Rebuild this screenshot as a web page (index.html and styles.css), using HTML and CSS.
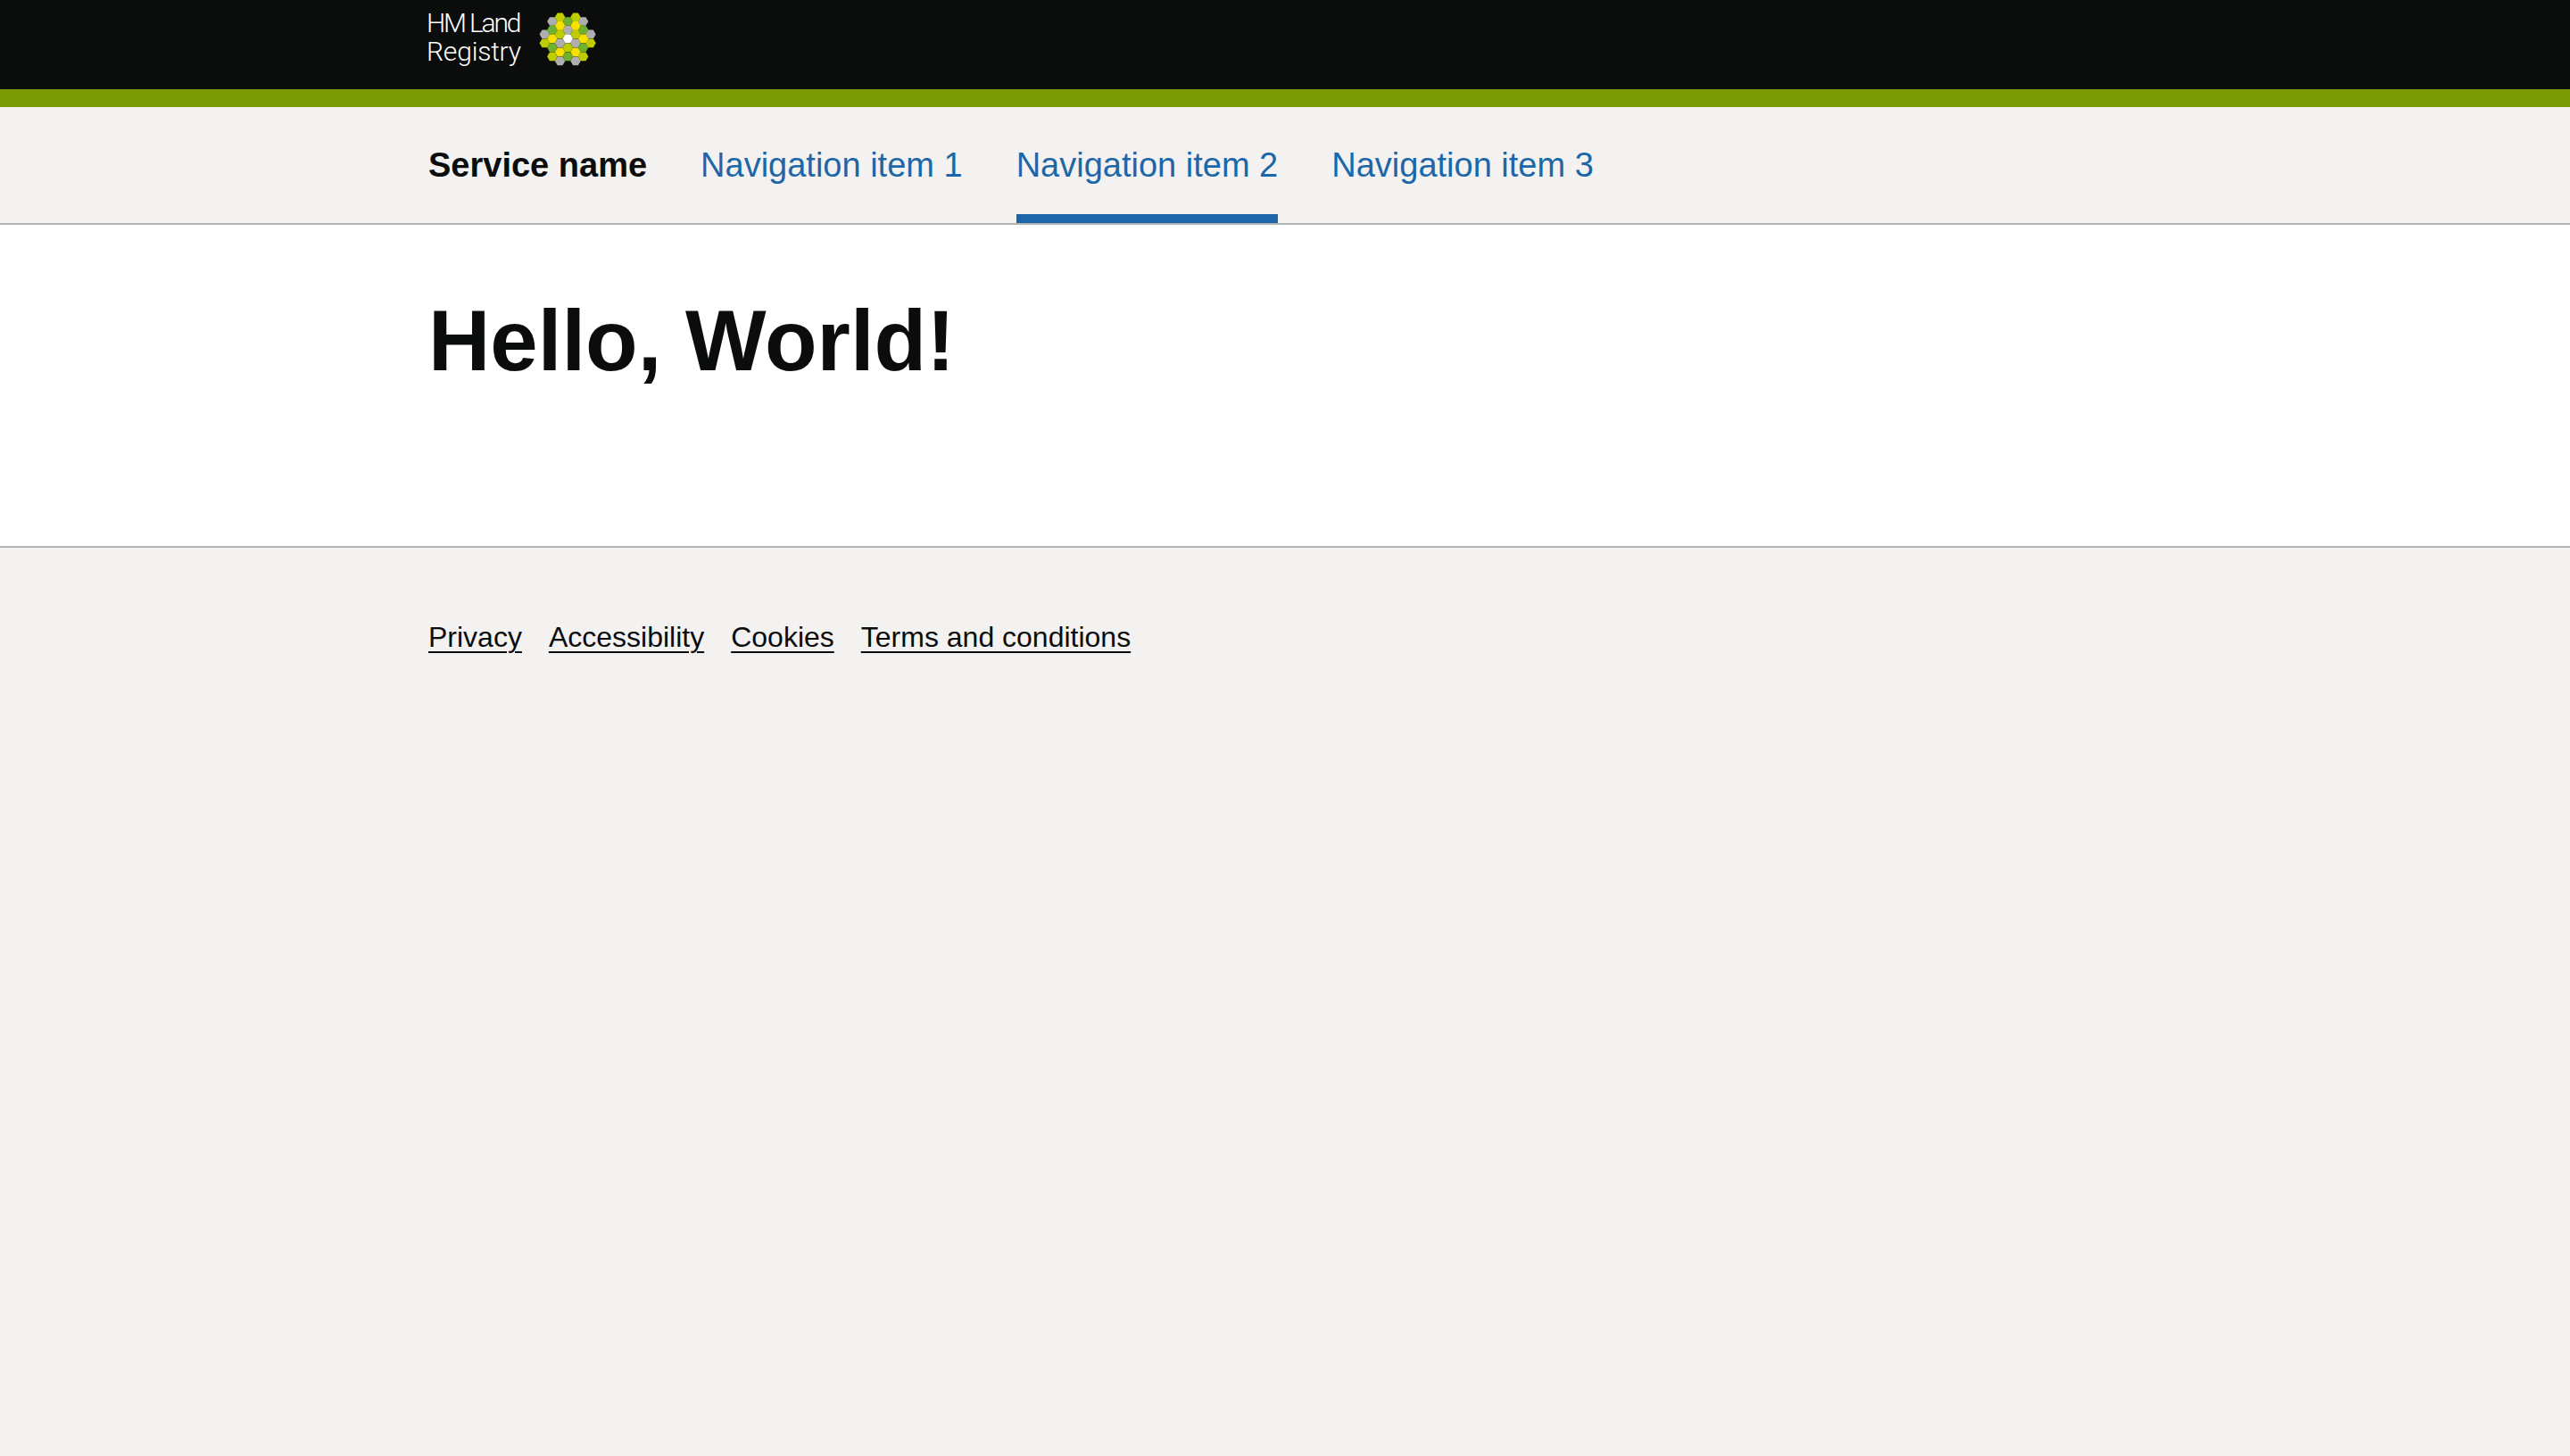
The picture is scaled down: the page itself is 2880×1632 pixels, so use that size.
FILE: index.html
```html
<!DOCTYPE html>
<html lang="en">
<head>
<meta charset="utf-8">
<title>Hello, World!</title>
<link rel="stylesheet" href="styles.css">
</head>
<body>
<header class="masthead">
  <div class="container masthead-inner">
    <a class="logo" href="#">
      <span class="logo-text"><span class="logo-line-1">HM Land</span><span class="logo-line-2">Registry</span></span>
      <svg class="logo-mark" width="64" height="70" viewBox="0 0 64 70" aria-hidden="true">
        <defs><polygon id="hex" points="-5.75,0 -2.9,-4.85 2.9,-4.85 5.75,0 2.9,4.85 -2.9,4.85"/></defs>
        <g class="hx-grey">
          <use href="#hex" x="14.9" y="19"/><use href="#hex" x="49.6" y="19"/>
          <use href="#hex" x="32.3" y="28.6"/>
          <use href="#hex" x="6.3" y="33.4"/><use href="#hex" x="58" y="33.4"/>
          <use href="#hex" x="23.6" y="43.3"/><use href="#hex" x="41" y="43.3"/>
          <use href="#hex" x="23.6" y="63.3"/><use href="#hex" x="41" y="63.3"/>
        </g>
        <g class="hx-green">
          <use href="#hex" x="32.3" y="19"/>
          <use href="#hex" x="14.9" y="28.6"/><use href="#hex" x="49.6" y="28.6"/>
          <use href="#hex" x="14.9" y="48.3"/><use href="#hex" x="49.6" y="48.3"/>
          <use href="#hex" x="32.3" y="58.3"/>
        </g>
        <g class="hx-olive">
          <use href="#hex" x="23.6" y="14.3"/><use href="#hex" x="41" y="14.3"/>
          <use href="#hex" x="23.6" y="33.4"/><use href="#hex" x="41" y="33.4"/>
          <use href="#hex" x="6.3" y="43.3"/><use href="#hex" x="58" y="43.3"/>
          <use href="#hex" x="32.3" y="48.3"/>
          <use href="#hex" x="14.9" y="58.3"/><use href="#hex" x="49.6" y="58.3"/>
        </g>
        <g class="hx-yellow">
          <use href="#hex" x="23.6" y="23.8"/><use href="#hex" x="41" y="23.8"/>
          <use href="#hex" x="14.9" y="38.3"/><use href="#hex" x="49.6" y="38.3"/>
          <use href="#hex" x="23.6" y="53.3"/><use href="#hex" x="41" y="53.3"/>
        </g>
        <use class="hx-white" href="#hex" x="32.3" y="38.3"/>
      </svg>
    </a>
  </div>
</header>
<div class="accent"></div>
<nav class="service-nav">
  <div class="container nav-inner">
    <span class="service-name">Service name</span>
    <a class="nav-item" href="#">Navigation item 1</a>
    <a class="nav-item is-active" href="#">Navigation item 2</a>
    <a class="nav-item" href="#">Navigation item 3</a>
  </div>
</nav>
<main class="main">
  <div class="container">
    <h1 class="title">Hello, World!</h1>
  </div>
</main>
<footer class="footer">
  <div class="container footer-links">
    <a href="#">Privacy</a>
    <a href="#">Accessibility</a>
    <a href="#">Cookies</a>
    <a href="#">Terms and conditions</a>
  </div>
</footer>
</body>
</html>
```

FILE: styles.css
```css
* { box-sizing: border-box; }
html, body { height: 100%; }
body {
  margin: 0;
  display: flex;
  flex-direction: column;
  background: #f3f2f1;
  color: #0b0c0c;
  font-family: "Liberation Sans", Arial, sans-serif;
}
.container { width: 1920px; margin: 0 auto; }
.masthead { height: 100px; background: #0b0c0c; }
.masthead-inner { height: 100%; }
.logo { display: flex; align-items: flex-start; color: #fff; text-decoration: none; }
.logo-text {
  display: block;
  width: 106px;
  margin: 10px 0 0 -2px;
  font-family: Roboto, sans-serif;
  font-weight: 300;
  font-size: 30px;
  line-height: 32px;
  white-space: nowrap;
}
.logo-line-1 { display: block; letter-spacing: -2.2px; }
.logo-line-2 { display: block; letter-spacing: -0.2px; }
.logo-mark { margin: 5px 0 0 20px; overflow: visible; }
.hx-olive { fill: #bfcc00; }
.hx-grey { fill: #aeaeae; }
.hx-green { fill: #6fb02f; }
.hx-yellow { fill: #f5e100; }
.hx-white { fill: #fff; }
.accent { height: 20px; background: #7c9a03; }
.service-nav { height: 132px; border-bottom: 2px solid #b1b4b6; }
.nav-inner { display: flex; height: 130px; gap: 60px; font-size: 38px; }
.service-name { line-height: 130px; font-weight: 700; }
.nav-item { line-height: 130px; color: #1d67a8; text-decoration: none; }
.is-active { border-bottom: 10px solid #1d67a8; }
.main { height: 362px; background: #fff; border-bottom: 2px solid #b1b4b6; }
.title {
  margin: 0;
  padding-top: 80px;
  font-size: 96px;
  line-height: 100px;
  font-weight: 700;
}
.footer { flex: 1; padding-top: 80px; }
.footer-links { display: flex; gap: 30px; font-size: 32px; line-height: 40px; }
.footer-links a { color: #0b0c0c; text-decoration: underline; text-decoration-thickness: 2px; text-underline-offset: 5px; }
```
